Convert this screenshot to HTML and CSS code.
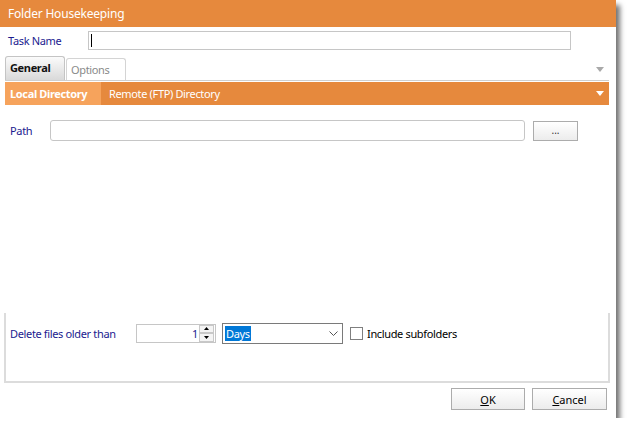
FILE: index.html
```html
<!DOCTYPE html>
<html>
<head>
<meta charset="utf-8">
<link rel="stylesheet" href="styles.css">
</head>
<body>
<div class="window">
  <div class="titlebar">Folder Housekeeping</div>
  <div class="taskrow">
    <span class="label task-label">Task Name</span>
    <div class="textbox task-input"><span class="caret"></span></div>
  </div>
  <div class="tabs">
    <div class="tab tab-active">General</div>
    <div class="tab tab-inactive">Options</div>
    <div class="tabs-fill"></div>
    <svg class="tab-arrow" width="8" height="5" viewBox="0 0 8 5"><path d="M0 0H8L4 5Z" fill="#a9a9a9"/></svg>
  </div>
  <div class="strip">
    <div class="strip-tab strip-active">Local Directory</div>
    <div class="strip-tab">Remote (FTP) Directory</div>
    <div class="tabs-fill"></div>
    <svg class="strip-arrow" width="8" height="5" viewBox="0 0 8 5"><path d="M0 0H8L4 5Z" fill="#ffffff"/></svg>
  </div>
  <div class="pathrow">
    <span class="label path-label">Path</span>
    <div class="textbox path-input"></div>
    <div class="button browse">...</div>
  </div>
  <div class="spacer"></div>
  <div class="group">
    <span class="label delete-label">Delete files older than</span>
    <div class="spin">
      <span class="spin-value">1</span>
      <div class="spin-buttons">
        <div class="spin-btn"><svg width="5" height="3" viewBox="0 0 5 3"><path d="M0 3H5L2.5 0Z" fill="#000"/></svg></div>
        <div class="spin-btn"><svg width="5" height="3" viewBox="0 0 5 3"><path d="M0 0H5L2.5 3Z" fill="#000"/></svg></div>
      </div>
    </div>
    <div class="combo">
      <span class="combo-value">Days</span>
      <svg class="chevron" width="9" height="5" viewBox="0 0 9 5"><path d="M0.5 0.5L4.5 4.5L8.5 0.5" stroke="#555" fill="none"/></svg>
    </div>
    <div class="checkbox"></div>
    <span class="check-label">Include subfolders</span>
  </div>
  <div class="buttons">
    <div class="button dlg-btn ok"><u>O</u>K</div>
    <div class="button dlg-btn cancel"><u>C</u>ancel</div>
  </div>
</div>
</body>
</html>
```

FILE: styles.css
```css
html, body {
  margin: 0;
  padding: 0;
  background: #ffffff;
}
body {
  font-family: "Noto Sans", "Open Sans", sans-serif;
  font-size: 11px;
  letter-spacing: -0.35px;
}
.window {
  width: 616px;
  height: 418px;
  background: #ffffff;
  box-shadow: 4px 5px 5px rgba(0, 0, 0, 0.55);
  display: flex;
  flex-direction: column;
}
.titlebar {
  height: 27px;
  background: #e6893d;
  color: #ffffff;
  font-size: 12px;
  letter-spacing: -0.2px;
  line-height: 27px;
  padding-left: 8px;
  box-sizing: border-box;
}
.label {
  color: #1b1b8f;
}
.taskrow {
  display: flex;
  align-items: center;
  margin-top: 4px;
  height: 19px;
}
.task-label {
  width: 80px;
  padding-left: 8px;
}
.textbox {
  border: 1px solid #c6c6c6;
  background: #fff;
  box-sizing: border-box;
}
.task-input {
  width: 483px;
  height: 19px;
  display: flex;
  align-items: center;
  padding-left: 2px;
}
.caret {
  width: 1px;
  height: 13px;
  background: #000;
}
.tabs {
  display: flex;
  align-items: flex-end;
  margin-top: 6px;
  margin-left: 5px;
  width: 604px;
  height: 24px;
  border-bottom: 1px solid #cfcfcf;
}
.tab {
  box-sizing: border-box;
  display: flex;
  align-items: center;
}
.tab-active {
  width: 60px;
  height: 24px;
  border: 1px solid #c4c4c4;
  border-bottom: none;
  border-radius: 3px 3px 0 0;
  background: linear-gradient(#fbfbfb, #d9d9d9);
  font-weight: bold;
  color: #111;
  padding-left: 4px;
  padding-bottom: 2px;
}
.tab-inactive {
  width: 60px;
  height: 22px;
  margin-left: 1px;
  border: 1px solid #d4d4d4;
  border-bottom: none;
  border-radius: 3px 3px 0 0;
  background: #ffffff;
  color: #8a8a8a;
  padding-left: 4px;
}
.tabs-fill {
  flex: 1;
}
.tab-arrow {
  align-self: center;
  margin-right: 5px;
  margin-top: 3px;
}
.strip {
  display: flex;
  align-items: center;
  margin-top: 1px;
  margin-left: 5px;
  width: 604px;
  height: 23px;
  background: #e6893d;
  color: #ffffff;
}
.strip-tab {
  height: 23px;
  line-height: 23px;
  padding: 0 8px 0 8px;
}
.strip-active {
  width: 96px;
  box-sizing: border-box;
  background: #f6a35c;
  font-weight: bold;
  padding-left: 5px;
  padding-right: 0;
}
.strip-arrow {
  margin-right: 5px;
}
.pathrow {
  display: flex;
  align-items: center;
  margin-top: 15px;
  height: 21px;
}
.path-label {
  width: 40px;
  padding-left: 10px;
}
.path-input {
  width: 475px;
  height: 21px;
  border-radius: 3px;
}
.button {
  box-sizing: border-box;
  border: 1px solid #acacac;
  background: linear-gradient(#ffffff, #ececec);
  display: flex;
  align-items: center;
  justify-content: center;
  color: #000;
}
.browse {
  margin-left: 8px;
  width: 45px;
  height: 20px;
  font-size: 10px;
  letter-spacing: 0;
  color: #333;
  padding-bottom: 2px;
}
.spacer {
  flex: 1;
}
.group {
  margin-left: 4px;
  width: 606px;
  height: 70px;
  box-sizing: border-box;
  border: 2px solid #dcdcdc;
  border-top: none;
  display: flex;
  align-items: center;
  padding-bottom: 28px;
}
.delete-label {
  width: 126px;
  padding-left: 4px;
}
.spin {
  width: 80px;
  height: 19px;
  box-sizing: border-box;
  border: 1px solid #c6c6c6;
  display: flex;
  align-items: center;
  justify-content: flex-end;
}
.spin-value {
  color: #1b1b8f;
  margin-right: 1px;
}
.spin-buttons {
  width: 15px;
  height: 17px;
  display: flex;
  flex-direction: column;
  margin-right: 1px;
}
.spin-btn {
  flex: 1;
  display: flex;
  align-items: center;
  justify-content: center;
  border: 1px solid #c8c8c8;
  background: #f4f4f4;
}
.combo {
  margin-left: 6px;
  width: 121px;
  height: 21px;
  box-sizing: border-box;
  border: 1px solid #7a7a7a;
  display: flex;
  align-items: center;
  justify-content: space-between;
  padding: 0 4px 0 2px;
}
.combo-value {
  background: #0078d7;
  color: #ffffff;
  line-height: 15px;
  padding: 0 1px;
}
.checkbox {
  margin-left: 7px;
  width: 13px;
  height: 13px;
  box-sizing: border-box;
  border: 1px solid #7f7f7f;
  background: #fff;
}
.check-label {
  margin-left: 4px;
  color: #000;
}
.buttons {
  display: flex;
  justify-content: flex-end;
  gap: 7px;
  padding-right: 9px;
  margin-top: 5px;
  margin-bottom: 8px;
}
.dlg-btn {
  width: 74px;
  height: 22px;
  letter-spacing: 0;
}
.cancel {
  width: 75px;
}
```
